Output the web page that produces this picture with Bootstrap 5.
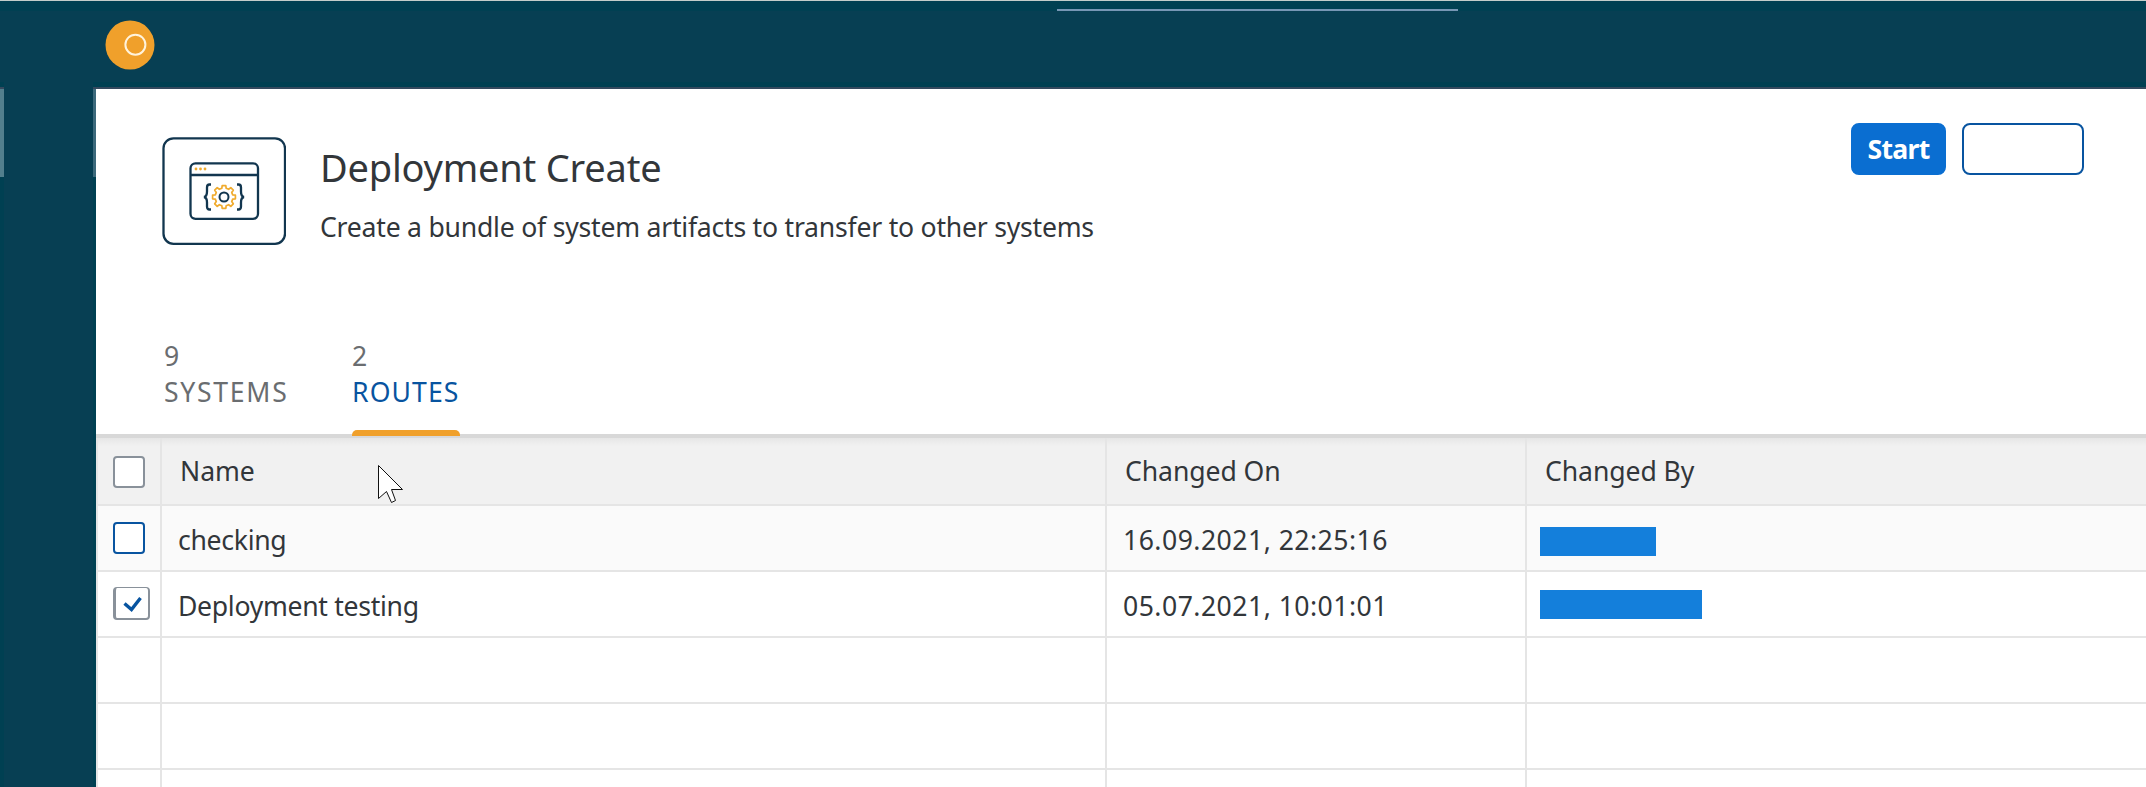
<!DOCTYPE html>
<html lang="en">
<head>
<meta charset="utf-8">
<title>Deployment Create</title>
<link href="https://cdn.jsdelivr.net/npm/bootstrap@5.3.0/dist/css/bootstrap.min.css" rel="stylesheet">
<style>
body{font-family:"Noto Sans","Open Sans",sans-serif;color:#32363a;background:#fff;font-size:26.6px;line-height:36px}
.shell{height:787px}
.shell-bar{height:89px;background:#073f53;border-top:1px solid #c3cdca;border-bottom:2px solid #34495e;box-shadow:inset 0 10px #004052,inset 0 -5px #004052}
.brand-dot{margin:19px 0 0 105px}
.loader{top:9px;left:1057px;width:401px;height:2px;background:#7797b5}
.rail{width:96px;background:linear-gradient(90deg,#004052 4px,#073f53 4px 93px,#004052 93px)}
.rail-ends{height:88px}
.rail-ends .l{width:4px;background:#527f8d}
.rail-ends .r{width:3px;background:#3c697b}
.top-patch{width:89px;height:72px;left:4px;top:17px;background:#073f53}
.page-head{height:345px}
.page-icon{margin:48px 0 0 66px}
.titles{margin:45px 0 0 34px}
.titles h1{font-size:38px;line-height:52px;font-weight:400;margin:7px 0 0;letter-spacing:-.2px}
.titles p{margin:16px 0 0;letter-spacing:-.23px}
.actions{margin:34px 62px 0 0;gap:16px}
.actions .btn{height:52px;border-radius:8px;border-width:2px;font-size:26.6px;font-weight:700;line-height:36px;padding:5px 0;letter-spacing:-.7px}
.go{width:95px;background:#0a6ed1;border-color:#0a6ed1;color:#fff}
.blank{width:122px;border-color:#0854a0}
.tabset{margin:0 0 -2px 68px;color:#6a6d70;position:relative}
.tabset .nav-link{padding:0 0 26px;color:inherit;width:188px;letter-spacing:1.7px}
.tabset .nav-link.active{width:108px;padding:0;letter-spacing:1.1px}
.tab-name{color:#0854a0;margin-bottom:20px}
.tabset .bar-mark{height:6px;background:#f0a02b;border-radius:5px 5px 0 0}
.edge{height:4px;background:#d8d8d8}
.grid-area{border-left:2px solid #e5e5e5}
.line{display:grid;grid-template-columns:64px 945px 420px 1fr;height:66px}
.line>div{border-right:2px solid #e5e5e5;border-bottom:2px solid #e5e5e5}
.line>div:last-child{border-right:0}
.line.top-line{height:68px;background:linear-gradient(#e6e6e6,#f1f1f1 8px)}
.line.top-line .tx{padding:15px 0 0 18px}
.line.soft{background:#fafafa}
.tx{padding:16px 0 0 16px;letter-spacing:-.3px}
.top-line .tx{letter-spacing:-.08px}
.tx.when{letter-spacing:.47px}
.box{width:32px;height:32px;border:2px solid #89919a;border-radius:4px;background:#fff;margin:18px 0 0 15px}
.soft .box{margin-top:16px;border-color:#0854a0}
.box.ticked{width:37px;height:33px;border-top-width:1px;border-left-width:3px;margin-top:15px}
.redact{height:29px;background:#147fdb;margin-left:13px}
.pointer{left:378px;top:465px}
</style>
</head>
<body class="overflow-hidden">
<div class="shell d-flex flex-column position-relative overflow-hidden">
  <header class="shell-bar flex-shrink-0 d-flex">
    <svg class="brand-dot" width="50" height="50"><circle cx="25" cy="25" r="24.500" fill="#f0a02b"/><circle cx="30.400" cy="24.700" r="10" fill="none" stroke="#fff3dc" stroke-width="2"/></svg>
  </header>
  <span class="loader position-absolute"></span>
  <span class="top-patch position-absolute"></span>
  <div class="d-flex flex-grow-1">
    <aside class="rail flex-shrink-0"><div class="rail-ends d-flex justify-content-between"><span class="l"></span><span class="r"></span></div></aside>
    <main class="flex-grow-1">
      <section class="page-head d-flex flex-column">
        <div class="d-flex align-items-start">
          <svg class="page-icon flex-shrink-0" width="124" height="108" fill="none" stroke="#12364f" stroke-width="2.300">
            <rect x="1.500" y="1.300" width="121.500" height="105.500" rx="10"/>
            <rect x="28.500" y="26.300" width="67.500" height="55.500" rx="5"/><path d="M28 38H96"/>
            <path d="M49 47.500h-1.500q-2.500 0-2.500 3v4q0 5-3 5.500q3 .5 3 5.500v4q0 3 2.500 3h1.500M75 47.500h1.500q2.500 0 2.500 3v4q0 5 3 5.500q-3 .5-3 5.500v4q0 3-2.500 3h-1.500"/>
            <circle cx="62" cy="60" r="4.500" stroke-width="2"/>
            <path id="gear" stroke="#f0ab2e" stroke-width="1.700" stroke-linejoin="round"/>
            <g fill="#f0ab2e" stroke="none"><circle cx="34" cy="32" r="1.400"/><circle cx="38.500" cy="32" r="1.400"/><circle cx="43" cy="32" r="1.400"/></g>
          </svg>
          <div class="titles"><h1>Deployment Create</h1><p>Create a bundle of system artifacts to transfer to other systems</p></div>
          <div class="actions d-flex ms-auto"><button class="btn go">Start</button><button class="btn blank" aria-label="More"></button></div>
        </div>
        <nav class="tabset nav mt-auto align-items-end">
          <a class="nav-link"><div>9</div><div>SYSTEMS</div></a>
          <a class="nav-link active"><div>2</div><div class="tab-name">ROUTES</div><div class="bar-mark"></div></a>
        </nav>
      </section>
      <div class="edge"></div>
      <section class="grid-area">
        <div class="line top-line"><div><div class="box"></div></div><div class="tx">Name</div><div class="tx">Changed On</div><div class="tx">Changed By</div></div>
        <div class="line soft"><div><div class="box"></div></div><div class="tx">checking</div><div class="tx when">16.09.2021, 22:25:16</div><div class="pt-1"><div class="redact" style="width:116px;margin-top:17px"></div></div></div>
        <div class="line"><div><div class="box ticked"><svg class="d-block" width="32" height="29"><path d="M8.500 15.500l7 6L24.500 10" fill="none" stroke="#0854a0" stroke-width="3.400"/></svg></div></div><div class="tx">Deployment testing</div><div class="tx when">05.07.2021, 10:01:01</div><div><div class="redact" style="width:162px;margin-top:18px"></div></div></div>
        <div class="line"><div></div><div></div><div></div><div></div></div>
        <div class="line"><div></div><div></div><div></div><div></div></div>
        <div class="line"><div></div><div></div><div></div><div></div></div>
      </section>
    </main>
  </div>
  <svg class="pointer position-absolute" width="27" height="40"><path d="M.5.500V33.500L8.500 26.500L13.500 37.500L17.500 35.500L13.500 24.500H24.500Z" fill="#fff" stroke="#111"/></svg>
</div>
<script src="https://cdn.jsdelivr.net/npm/bootstrap@5.3.0/dist/js/bootstrap.bundle.min.js"></script>
<script>
// Gear outline with eight teeth
const pts=[];
for(let i=0;i<8;i++)for(const [o,r] of [[-14,9],[-9,11.500],[9,11.500],[14,9]]){
  const a=(i*45+o-90)*Math.PI/180;pts.push((62+r*Math.cos(a)).toFixed(1)+' '+(60+r*Math.sin(a)).toFixed(1));
}
document.getElementById('gear').setAttribute('d','M'+pts.join('L')+'Z');
</script>
</body>
</html>
